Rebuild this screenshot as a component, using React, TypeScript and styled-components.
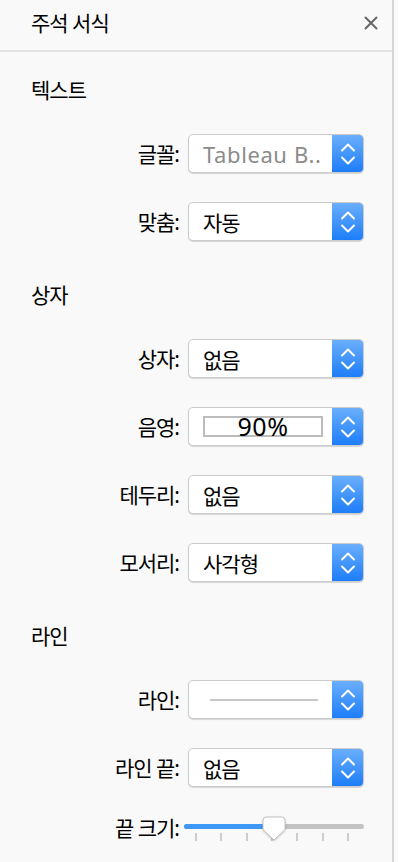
import React from "react";
import styled, { createGlobalStyle } from "styled-components";

const GlobalStyle = createGlobalStyle`
  html, body {
    margin: 0;
    padding: 0;
    background: #fbfbfb;
  }
  body {
    font-family: "Noto Sans", "Noto Sans CJK KR", sans-serif;
    color: #111;
  }
`;

const Panel = styled.div`
  width: 392px;
  min-height: 862px;
  background: #f9f9f9;
  border-right: 2px solid #d6d6d6;
  box-sizing: content-box;
`;

const Header = styled.div`
  height: 50px;
  border-bottom: 2px solid #e2e2e2;
  display: flex;
  align-items: center;
  justify-content: space-between;
  padding: 0 14px 0 31px;
  box-sizing: content-box;
`;

const KoText = styled.div`
  font-size: 21px;
  letter-spacing: -1px;
  font-weight: 400;
  line-height: 24px;
  color: #000;
`;

const Title = styled(KoText)`
  margin-top: -4px;
`;

const CloseButton = styled.button`
  width: 14px;
  height: 14px;
  padding: 0;
  margin: -4px 0 0 0;
  border: none;
  background: none;
  display: flex;
  color: #666;
`;

const Content = styled.div`
  padding-top: 26px;
  display: flex;
  flex-direction: column;
`;

const Section = styled.section`
  display: flex;
  flex-direction: column;
  & + & {
    margin-top: 42px;
  }
`;

const SectionTitle = styled(KoText)`
  height: 24px;
  padding-left: 31px;
  margin-bottom: 32px;
`;

const Rows = styled.div`
  display: flex;
  flex-direction: column;
  gap: 29px;
`;

const Row = styled.div<{ $h?: number }>`
  display: grid;
  grid-template-columns: 180px 176px;
  column-gap: 8px;
  align-items: center;
  height: ${(p) => p.$h ?? 39}px;
`;

const Label = styled(KoText)`
  text-align: right;
  white-space: nowrap;
  padding-right: 1px;
`;

const SelectBox = styled.div`
  height: 39px;
  box-sizing: border-box;
  display: flex;
  background: #fff;
  border: 1px solid #cbcbcb;
  border-radius: 5px;
  box-shadow: 0 1px 1px rgba(0, 0, 0, 0.14);
  overflow: hidden;
`;

const Value = styled.div<{ $muted?: boolean }>`
  flex: 1;
  display: flex;
  align-items: center;
  padding-left: 14px;
  font-size: ${(p) => (p.$muted ? 22 : 21)}px;
  letter-spacing: ${(p) => (p.$muted ? 0.6 : -1)}px;
  color: ${(p) => (p.$muted ? "#8b8b8b" : "#000")};
  white-space: nowrap;
  overflow: hidden;
`;

const Stepper = styled.div`
  width: 32px;
  flex: none;
  display: flex;
  align-items: center;
  justify-content: center;
  background: linear-gradient(#6cb0fc, #1b7cf8);
  margin: -1px -1px -1px 0;
`;

const ShadeFrame = styled.div`
  width: 120px;
  height: 21px;
  box-sizing: border-box;
  border: 2px solid #bcbcbc;
  display: flex;
  align-items: center;
  justify-content: center;
  font-size: 25px;
  letter-spacing: 0.5px;
  line-height: 21px;
  color: #000;
`;

const LineSample = styled.div`
  width: 108px;
  height: 2px;
  margin-left: 7px;
  margin-top: 1px;
  background: #c8c8c8;
`;

const Slider = styled.div`
  position: relative;
  width: 180px;
  height: 24px;
  margin-left: -4px;
`;

const Track = styled.div`
  position: absolute;
  left: 0;
  right: 0;
  top: 8px;
  height: 5px;
  border-radius: 3px;
  background: #c3c3c3;
  overflow: hidden;
`;

const Fill = styled.div`
  height: 100%;
  background: #3e98f8;
`;

const Ticks = styled.div`
  position: absolute;
  left: 11px;
  right: 15px;
  top: 17px;
  display: flex;
  justify-content: space-between;
`;

const Tick = styled.div`
  width: 2px;
  height: 8px;
  background: #cdcdcd;
`;

const Thumb = styled.svg`
  position: absolute;
  top: 0;
  filter: drop-shadow(0 1px 1px rgba(0, 0, 0, 0.2));
`;

const Chevrons = () => (
  <svg width="16" height="24" viewBox="0 0 16 24" fill="none">
    <polyline points="2,8.5 8,2.5 14,8.5" stroke="#fff" strokeWidth="2" strokeLinecap="round" strokeLinejoin="round" />
    <polyline points="2,15.5 8,21.5 14,15.5" stroke="#fff" strokeWidth="2" strokeLinecap="round" strokeLinejoin="round" />
  </svg>
);

const Select: React.FC<{ children?: React.ReactNode }> = ({ children }) => (
  <SelectBox>
    {children}
    <Stepper>
      <Chevrons />
    </Stepper>
  </SelectBox>
);

const thumbCenter = 90;

export default function App() {
  return (
    <>
      <GlobalStyle />
      <Panel>
        <Header>
          <Title>주석 서식</Title>
          <CloseButton aria-label="닫기">
            <svg width="14" height="14" viewBox="0 0 14 14">
              <path d="M1.5 1.5 L12.5 12.5 M12.5 1.5 L1.5 12.5" stroke="currentColor" strokeWidth="2" strokeLinecap="round" />
            </svg>
          </CloseButton>
        </Header>
        <Content>
          <Section>
            <SectionTitle>텍스트</SectionTitle>
            <Rows>
              <Row>
                <Label>글꼴:</Label>
                <Select>
                  <Value $muted>Tableau B..</Value>
                </Select>
              </Row>
              <Row>
                <Label>맞춤:</Label>
                <Select>
                  <Value>자동</Value>
                </Select>
              </Row>
            </Rows>
          </Section>
          <Section>
            <SectionTitle>상자</SectionTitle>
            <Rows>
              <Row>
                <Label>상자:</Label>
                <Select>
                  <Value>없음</Value>
                </Select>
              </Row>
              <Row>
                <Label>음영:</Label>
                <Select>
                  <Value>
                    <ShadeFrame>90%</ShadeFrame>
                  </Value>
                </Select>
              </Row>
              <Row>
                <Label>테두리:</Label>
                <Select>
                  <Value>없음</Value>
                </Select>
              </Row>
              <Row>
                <Label>모서리:</Label>
                <Select>
                  <Value>사각형</Value>
                </Select>
              </Row>
            </Rows>
          </Section>
          <Section>
            <SectionTitle>라인</SectionTitle>
            <Rows>
              <Row>
                <Label>라인:</Label>
                <Select>
                  <Value>
                    <LineSample />
                  </Value>
                </Select>
              </Row>
              <Row>
                <Label>라인 끝:</Label>
                <Select>
                  <Value>없음</Value>
                </Select>
              </Row>
              <Row $h={24}>
                <Label>끝 크기:</Label>
                <Slider>
                  <Track>
                    <Fill style={{ width: thumbCenter - 8 }} />
                  </Track>
                  <Ticks>
                    {Array.from({ length: 7 }).map((_, i) => (
                      <Tick key={i} />
                    ))}
                  </Ticks>
                  <Thumb
                    width="24"
                    height="25"
                    viewBox="0 0 24 25"
                    style={{ left: thumbCenter - 12 }}
                  >
                    <path
                      d="M4.5 1 H19.5 A3.5 3.5 0 0 1 23 4.5 V13.5 L12 24 L1 13.5 V4.5 A3.5 3.5 0 0 1 4.5 1 Z"
                      fill="#fff"
                      stroke="#c2c2c2"
                      strokeWidth="1"
                    />
                  </Thumb>
                </Slider>
              </Row>
            </Rows>
          </Section>
        </Content>
      </Panel>
    </>
  );
}
